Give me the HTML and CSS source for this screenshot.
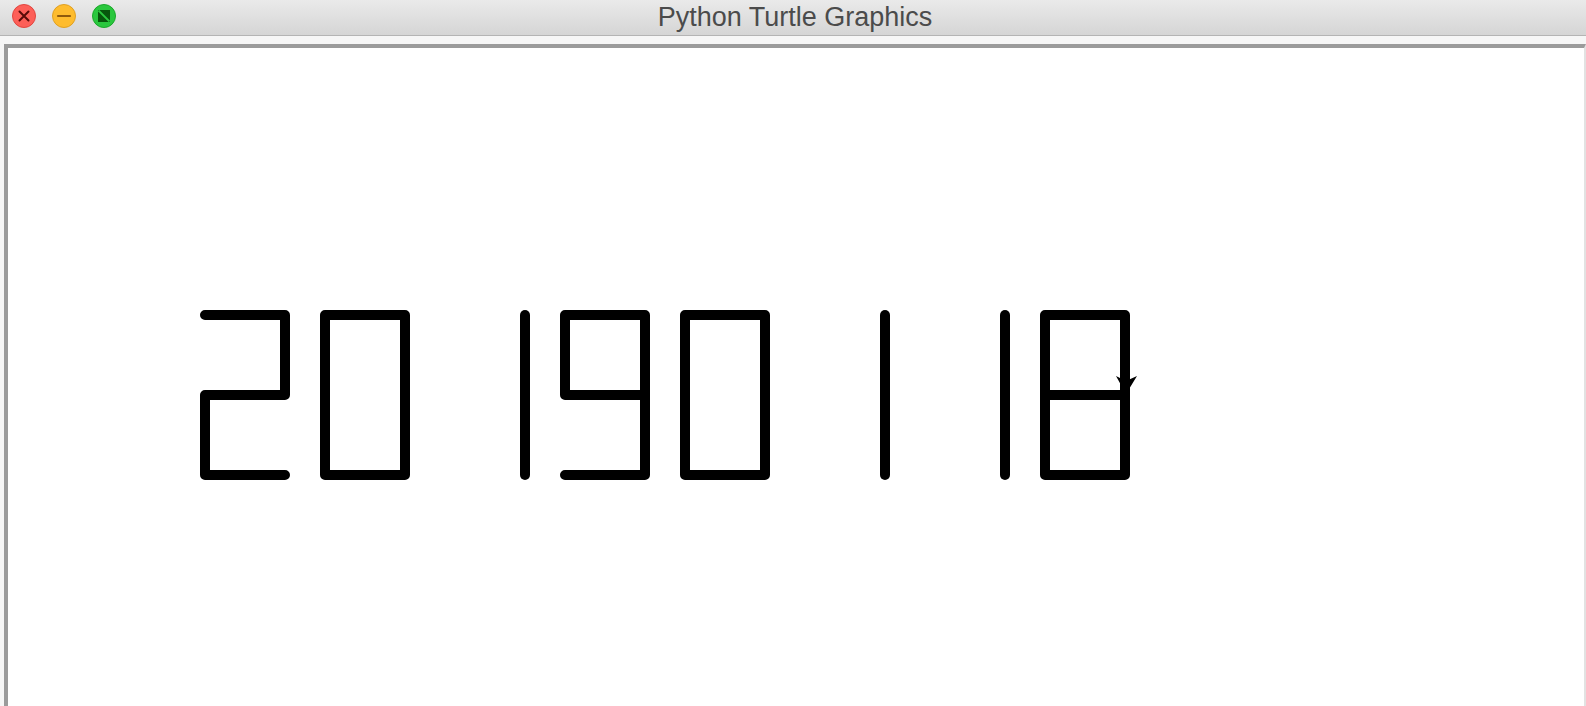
FILE: index.html
```html
<!DOCTYPE html>
<html lang="en">
<head>
<meta charset="utf-8">
<title>Python Turtle Graphics</title>
<link rel="stylesheet" href="styles.css">
</head>
<body>
<div class="window">
  <header class="titlebar">
    <div class="lights">
      <svg class="light" width="24" height="24" viewBox="0 0 24 24">
        <circle cx="12" cy="12" r="11.5" fill="#fd5f58" stroke="#e1463f" stroke-width="1"/>
        <path d="M7.5 7.5 L16.5 16.5 M16.5 7.5 L7.5 16.5" stroke="#5a0b08" stroke-width="2" stroke-linecap="round"/>
      </svg>
      <svg class="light" width="24" height="24" viewBox="0 0 24 24">
        <circle cx="12" cy="12" r="11.5" fill="#febc2e" stroke="#dfa023" stroke-width="1"/>
        <path d="M6 12 H18" stroke="#8f5a0c" stroke-width="2.2" stroke-linecap="round"/>
      </svg>
      <svg class="light" width="24" height="24" viewBox="0 0 24 24">
        <circle cx="12" cy="12" r="11.5" fill="#2ac73e" stroke="#1ba82b" stroke-width="1"/>
        <polygon points="6,6 18,6 18,18 6,18" fill="#07560c"/>
        <path d="M6.5 6.5 L17.5 17.5" stroke="#2ac73e" stroke-width="1.8"/>
      </svg>
    </div>
    <div class="title">Python Turtle Graphics</div>
    <div class="spacer"></div>
  </header>
  <main class="canvas">
    <svg class="drawing" width="1576" height="658" viewBox="8 48 1576 658">
      <g fill="none" stroke="#000" stroke-width="10" stroke-linecap="round" stroke-linejoin="round">
        <polyline points="205,315 285,315 285,395 205,395 205,475 285,475"/>
        <polyline points="325,315 405,315 405,475 325,475 325,315"/>
        <line x1="525" y1="315" x2="525" y2="475"/>
        <polyline points="565,475 645,475 645,315 565,315 565,395 645,395"/>
        <polyline points="685,315 765,315 765,475 685,475 685,315"/>
        <line x1="885" y1="315" x2="885" y2="475"/>
        <line x1="1005" y1="315" x2="1005" y2="475"/>
        <polyline points="1045,395 1045,315 1125,315 1125,475 1045,475 1045,395 1125,395"/>
      </g>
      <polygon points="1126,394 1116,376 1126,381 1137,376" fill="#000"/>
    </svg>
  </main>
</div>
</body>
</html>
```
FILE: styles.css
```css
html, body {
  margin: 0;
  padding: 0;
  background: #f6f6f6;
  overflow: hidden;
}

.window {
  width: 1586px;
  height: 706px;
  display: flex;
  flex-direction: column;
}

.titlebar {
  height: 35px;
  border-bottom: 1px solid #b4b4b4;
  background: linear-gradient(#eaeaea, #d5d5d5);
  display: grid;
  grid-template-columns: 1fr auto 1fr;
  flex: none;
}

.lights {
  display: flex;
  gap: 16px;
  padding-left: 12px;
  padding-top: 4px;
  align-items: flex-start;
}

.light {
  display: block;
}

.title {
  font-family: "Liberation Sans", Arial, sans-serif;
  font-size: 27px;
  line-height: 35px;
  color: #4b4b4b;
  padding-left: 4px;
}

.canvas {
  margin: 8px 0 0 4px;
  border-top: 4px solid #9b9b9b;
  border-left: 4px solid #9b9b9b;
  border-right: 2px solid #e2e2e2;
  background: #fff;
  flex: 1;
  overflow: hidden;
}

.drawing {
  display: block;
}
```
